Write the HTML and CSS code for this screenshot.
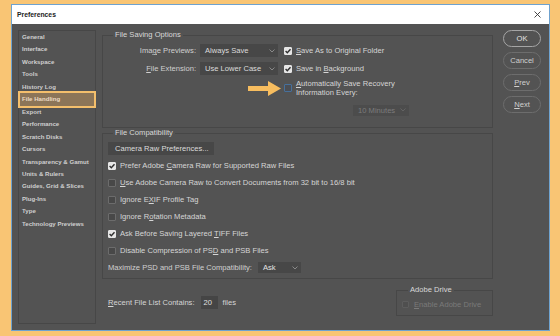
FILE: index.html
```html
<!DOCTYPE html>
<html>
<head>
<meta charset="utf-8">
<link rel="stylesheet" href="styles.css">
</head>
<body>
<div class="dialog">
  <div class="titlebar">
    <span class="title">Preferences</span>
    <svg class="close" width="7" height="7" viewBox="0 0 7 7"><path d="M0.5 0.5L6.5 6.5M6.5 0.5L0.5 6.5" stroke="#333" stroke-width="0.9"/></svg>
  </div>
  <div class="body">
    <ul class="sidebar">
      <li>General</li>
      <li>Interface</li>
      <li>Workspace</li>
      <li>Tools</li>
      <li>History Log</li>
      <li class="active"><span>File Handling</span></li>
      <li>Export</li>
      <li>Performance</li>
      <li>Scratch Disks</li>
      <li>Cursors</li>
      <li>Transparency &amp; Gamut</li>
      <li>Units &amp; Rulers</li>
      <li>Guides, Grid &amp; Slices</li>
      <li>Plug-Ins</li>
      <li>Type</li>
      <li>Technology Previews</li>
    </ul>

    <div class="main">
      <fieldset class="group saving">
        <legend>File Saving Options</legend>
        <div class="row r1">
          <span class="lbl">Ima<u>g</u>e Previews:</span>
          <div class="select sel-a"><span>Always Save</span><svg class="chev" width="6" height="4" viewBox="0 0 6 4"><polyline points="0.5,0.5 3,3 5.5,0.5" fill="none" stroke="#9a9a9a" stroke-width="0.8"/></svg></div>
          <span class="cb on"><svg viewBox="0 0 8 8"><polyline points="1.6,4 3.3,5.7 6.5,2.2" fill="none" stroke="#2e2e2e" stroke-width="1.4"/></svg></span>
          <span class="txt"><u>S</u>ave As to Original Folder</span>
        </div>
        <div class="row r2">
          <span class="lbl"><u>F</u>ile Extension:</span>
          <div class="select sel-a"><span>Use Lower Case</span><svg class="chev" width="6" height="4" viewBox="0 0 6 4"><polyline points="0.5,0.5 3,3 5.5,0.5" fill="none" stroke="#9a9a9a" stroke-width="0.8"/></svg></div>
          <span class="cb on"><svg viewBox="0 0 8 8"><polyline points="1.6,4 3.3,5.7 6.5,2.2" fill="none" stroke="#2e2e2e" stroke-width="1.4"/></svg></span>
          <span class="txt">Save in <u>B</u>ackground</span>
        </div>
        <div class="row r3">
          <svg class="arrow" width="33" height="15" viewBox="0 0 33 15"><path d="M0 5H20V0L33 7.5L20 15V10H0Z" fill="#f7bd5f"/></svg>
          <span class="cb focus"></span>
          <span class="txt two"><u>A</u>utomatically Save Recovery<br>Information Every:</span>
        </div>
        <div class="row r4">
          <div class="select sel-dis"><span>10 Minutes</span><svg class="chev" width="6" height="4" viewBox="0 0 6 4"><polyline points="0.5,0.5 3,3 5.5,0.5" fill="none" stroke="#6a6a6a" stroke-width="0.8"/></svg></div>
        </div>
      </fieldset>

      <fieldset class="group compat">
        <legend>File Compatibility</legend>
        <div class="btn-rect">Camera Raw Preferences...</div>
        <div class="crow"><span class="cb on"><svg viewBox="0 0 8 8"><polyline points="1.6,4 3.3,5.7 6.5,2.2" fill="none" stroke="#2e2e2e" stroke-width="1.4"/></svg></span><span class="txt">Prefer Adobe <u>C</u>amera Raw for Supported Raw Files</span></div>
        <div class="crow"><span class="cb"></span><span class="txt"><u>U</u>se Adobe Camera Raw to Convert Documents from 32 bit to 16/8 bit</span></div>
        <div class="crow"><span class="cb"></span><span class="txt">Ignore E<u>X</u>IF Profile Tag</span></div>
        <div class="crow"><span class="cb"></span><span class="txt">Ignore R<u>o</u>tation Metadata</span></div>
        <div class="crow"><span class="cb on"><svg viewBox="0 0 8 8"><polyline points="1.6,4 3.3,5.7 6.5,2.2" fill="none" stroke="#2e2e2e" stroke-width="1.4"/></svg></span><span class="txt">Ask Before Saving Layered <u>T</u>IFF Files</span></div>
        <div class="crow"><span class="cb"></span><span class="txt">Disable Compression of PS<u>D</u> and PSB Files</span></div>
        <div class="crow maxrow"><span class="mlbl">Maximize PSD and PSB File Compatibility:</span><div class="select sel-ask"><span>Ask</span><svg class="chev" width="6" height="4" viewBox="0 0 6 4"><polyline points="0.5,0.5 3,3 5.5,0.5" fill="none" stroke="#9a9a9a" stroke-width="0.8"/></svg></div></div>
      </fieldset>

      <div class="bottom">
        <div class="recent">
          <span class="txt"><u>R</u>ecent File List Contains:</span>
          <span class="num">20</span>
          <span class="txt files">files</span>
        </div>
        <fieldset class="group drive">
          <legend>Adobe Drive</legend>
          <div class="drow"><span class="cb dis"></span><span class="txt dim"><u>E</u>nable Adobe Drive</span></div>
        </fieldset>
      </div>
    </div>

    <div class="buttons">
      <div class="pill ok">OK</div>
      <div class="pill">Cancel</div>
      <div class="pill"><u>P</u>rev</div>
      <div class="pill"><u>N</u>ext</div>
    </div>
  </div>
</div>
</body>
</html>
```

FILE: styles.css
```css
* { box-sizing: border-box; }
html, body { margin: 0; padding: 0; }
body {
  background: #f9c574;
  width: 560px;
  height: 336px;
  overflow: hidden;
  font-family: "Liberation Sans", Arial, sans-serif;
  color: #d6d6d6;
}
u { text-decoration: underline; text-underline-offset: 1px; text-decoration-thickness: 0.6px; }

.dialog {
  margin: 4px 0 0 11px;
  width: 539px;
  height: 327px;
  border: 1px solid #6ea2cf;
  background: #535353;
  display: flex;
  flex-direction: column;
}
.titlebar {
  flex: none;
  height: 19px;
  background: #ffffff;
  display: flex;
  align-items: center;
  justify-content: space-between;
  padding: 0 8px 0 5px;
}
.title { font-weight: bold; font-size: 6.8px; color: #222; }
.close { display: block; }

.body {
  flex: 1;
  display: flex;
  padding: 6px 0 0 6px;
}

/* sidebar */
.sidebar {
  list-style: none;
  margin: 0;
  padding: 0;
  flex: none;
  width: 78px;
  height: 294px;
  border: 1px solid #474747;
}
.sidebar li {
  font-size: 6.1px;
  font-weight: bold;
  line-height: 12.45px;
  padding-left: 3px;
  color: #cfcfcf;
  position: relative;
  white-space: nowrap;
}
.sidebar li.active::before {
  content: "";
  position: absolute;
  left: -1px;
  right: -1px;
  top: -2px;
  bottom: -2px;
  border: 2px solid #f4bf6c;
  background: #8c7558;
}
.sidebar li.active span { position: relative; color: #ecdcc4; }

/* main */
.main {
  flex: none;
  width: 391px;
  margin-left: 6px;
  font-size: 7.6px;
}
fieldset.group {
  margin: 0;
  padding: 0;
  border: 1px solid #474747;
  min-width: 0;
}
legend {
  font-size: 7.6px;
  line-height: 10px;
  color: #d8d8d8;
  padding: 0 2px;
  margin-left: 10px;
}
.saving { height: 98px; }
.row { display: flex; align-items: center; white-space: nowrap; }
.r1 { margin-top: 4px; height: 13px; }
.r2 { margin-top: 5px; height: 13px; }
.r3 { margin-top: 4px; height: 18.4px; }
.r4 { margin-top: 7.6px; height: 11px; }
.lbl { width: 93px; text-align: right; color: #d0d0d0; }
.select {
  display: flex;
  align-items: center;
  justify-content: space-between;
  background: #474747;
  padding: 0 3px 0 5px;
  color: #dcdcdc;
}
.sel-a { width: 78px; height: 13px; margin-left: 4px; }
.r1 .cb, .r2 .cb { margin-left: 6px; }
.txt { margin-left: 4px; color: #d6d6d6; white-space: nowrap; }
.two { line-height: 9.2px; }

.cb {
  flex: none;
  display: inline-block;
  width: 8px;
  height: 8px;
  border: 1px solid #6c6c6c;
  background: #484848;
  border-radius: 1px;
}
.cb svg { display: block; width: 8px; height: 8px; margin: -1px; }
.cb.on { background: #e6e6e6; border-color: #e6e6e6; }
.cb.focus { border-color: #46709c; background: #4b4e54; }
.cb.dis { border-color: #5d5d5d; background: #4f4f4f; width: 7px; height: 7px; }

.arrow { margin-left: 145px; display: block; flex: none; }
.r3 .cb { margin-left: 3px; }

.sel-dis { margin-left: 250px; width: 56px; height: 11px; background: #4c4c4c; color: #7c7c7c; }

/* compat */
.compat { margin-top: 5px; height: 151px; }
.btn-rect {
  margin: 4px 0 0 5px;
  width: 106px;
  height: 13px;
  line-height: 13px;
  background: #474747;
  padding-left: 7px;
  color: #dcdcdc;
}
.crow {
  display: flex;
  align-items: center;
  height: 17px;
  padding-left: 5px;
}
.btn-rect + .crow { margin-top: 2px; }
.mlbl { width: 150px; color: #d0d0d0; white-space: nowrap; }
.sel-ask { width: 43px; height: 11px; color: #e4e4e4; }

/* bottom */
.bottom {
  display: flex;
  justify-content: space-between;
  align-items: flex-start;
  margin-top: 6px;
}
.recent {
  display: flex;
  align-items: center;
  height: 13px;
  margin: 11px 0 0 6px;
}
.recent .txt:first-child { margin-left: 0; }
.num {
  margin-left: 6px;
  width: 17px;
  height: 13px;
  line-height: 13px;
  background: #454545;
  padding-left: 3px;
  color: #e0e0e0;
}
.files { margin-left: 5px; }
.drive { width: 97px; height: 31px; }
.drive legend { margin-left: 11px; }
.drow { display: flex; align-items: center; height: 12px; margin-top: 3px; padding-left: 5px; }
.dim { color: #7a7a7a; margin-left: 5px; }

/* buttons */
.buttons {
  flex: none;
  margin-left: 10px;
  width: 38px;
  display: flex;
  flex-direction: column;
  gap: 5px;
}
.pill {
  height: 17px;
  border: 1px solid #6d6d6d;
  border-radius: 9px;
  font-size: 7.6px;
  line-height: 15px;
  text-align: center;
  color: #d0d0d0;
}
.pill.ok { border-color: #a5a5a5; color: #e2e2e2; }
```
